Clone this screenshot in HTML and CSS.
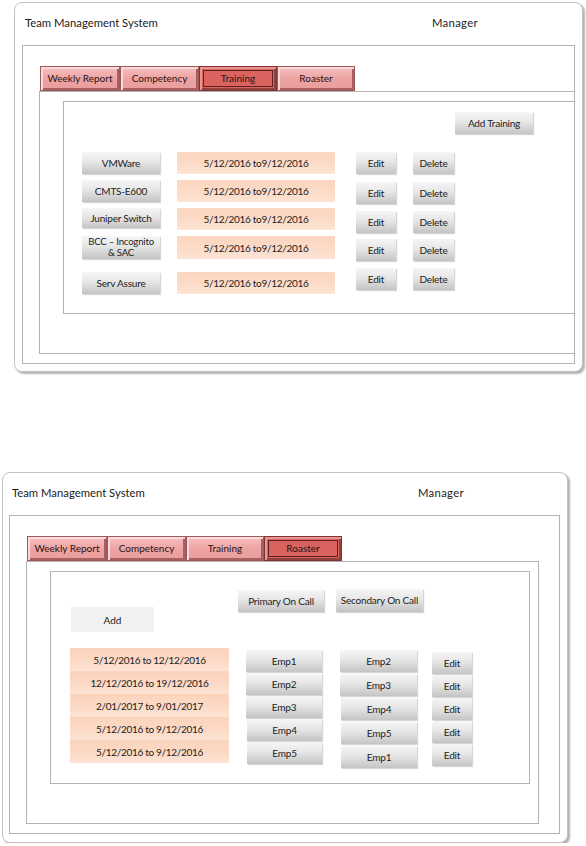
FILE: index.html
```html
<!DOCTYPE html>
<html lang="en">
<head>
<meta charset="utf-8">
<title>Team Management System</title>
<link rel="stylesheet" href="styles.css">
</head>
<body>
<div class="page">
  <section class="screen screen-a">
    <header class="head">
      <span class="title">Team Management System</span>
      <span class="role">Manager</span>
    </header>
    <div class="frame">
      <nav class="tabs">
        <div class="tab t1">Weekly Report</div>
        <div class="tab t2">Competency</div>
        <div class="tab t3 active">Training</div>
        <div class="tab t4">Roaster</div>
      </nav>
      <div class="panel">
        <div class="content">
          <div class="toolbar">
            <div class="btn add-training">Add Training</div>
          </div>
          <div class="trow">
            <div class="btn name">VMWare</div>
            <div class="date">5/12/2016 to9/12/2016</div>
            <div class="btn act edit">Edit</div>
            <div class="btn act delete">Delete</div>
          </div>
          <div class="trow">
            <div class="btn name">CMTS-E600</div>
            <div class="date">5/12/2016 to9/12/2016</div>
            <div class="btn act edit drop2">Edit</div>
            <div class="btn act delete drop2">Delete</div>
          </div>
          <div class="trow">
            <div class="btn name short">Juniper Switch</div>
            <div class="date">5/12/2016 to9/12/2016</div>
            <div class="btn act edit drop3">Edit</div>
            <div class="btn act delete drop3">Delete</div>
          </div>
          <div class="trow tall">
            <div class="btn name two">BCC – Incognito<br>&amp; SAC</div>
            <div class="date two">5/12/2016 to9/12/2016</div>
            <div class="btn act edit drop3">Edit</div>
            <div class="btn act delete drop3">Delete</div>
          </div>
          <div class="trow">
            <div class="btn name">Serv Assure</div>
            <div class="date">5/12/2016 to9/12/2016</div>
            <div class="btn act edit lift4">Edit</div>
            <div class="btn act delete lift4">Delete</div>
          </div>
        </div>
      </div>
    </div>
  </section>

  <section class="screen screen-b">
    <header class="head">
      <span class="title">Team Management System</span>
      <span class="role">Manager</span>
    </header>
    <div class="frame">
      <nav class="tabs">
        <div class="tab t1">Weekly Report</div>
        <div class="tab t2">Competency</div>
        <div class="tab t3">Training</div>
        <div class="tab t4 active">Roaster</div>
      </nav>
      <div class="panel">
        <div class="content">
          <div class="oncall-bar">
            <div class="add">Add</div>
            <div class="btn primary">Primary On Call</div>
            <div class="btn secondary">Secondary On Call</div>
          </div>
          <div class="roster">
            <div class="col dates">
              <div class="rdate">5/12/2016 to 12/12/2016</div>
              <div class="rdate">12/12/2016 to 19/12/2016</div>
              <div class="rdate">2/01/2017 to 9/01/2017</div>
              <div class="rdate">5/12/2016 to 9/12/2016</div>
              <div class="rdate">5/12/2016 to 9/12/2016</div>
            </div>
            <div class="col emp1">
              <div class="btn emp">Emp1</div>
              <div class="btn emp">Emp2</div>
              <div class="btn emp">Emp3</div>
              <div class="btn emp shift">Emp4</div>
              <div class="btn emp shift">Emp5</div>
            </div>
            <div class="col emp2">
              <div class="btn emp">Emp2</div>
              <div class="btn emp">Emp3</div>
              <div class="btn emp shift">Emp4</div>
              <div class="btn emp shift">Emp5</div>
              <div class="btn emp shift">Emp1</div>
            </div>
            <div class="col edits">
              <div class="btn redit">Edit</div>
              <div class="btn redit">Edit</div>
              <div class="btn redit">Edit</div>
              <div class="btn redit">Edit</div>
              <div class="btn redit">Edit</div>
            </div>
          </div>
        </div>
      </div>
    </div>
  </section>
</div>
</body>
</html>
```

FILE: styles.css
```css
* { box-sizing: border-box; }

body {
  margin: 0;
  background: #ffffff;
  font-family: Lato, "Noto Sans", sans-serif;
  color: #1c1c1c;
}

.page { padding-top: 2px; }

.screen {
  border: 1px solid #c2c2c2;
  border-radius: 8px;
  box-shadow: 2px 2px 2px #b2b2b2;
  background: #fff;
}
.screen-a { margin-left: 14px; width: 569px; height: 370px; }
.screen-b { margin-left: 2px; margin-top: 100px; width: 566px; height: 371px; }

.head {
  display: grid;
  grid-template-columns: 407px auto;
  height: 42px;
  padding: 12px 0 0 10px;
  font-size: 11.3px;
  line-height: 16px;
  white-space: nowrap;
}
.screen-b .head { padding-left: 9px; grid-template-columns: 406px auto; }
.role { letter-spacing: 0.3px; }

.frame {
  border: 1px solid #b2b2b2;
  height: 319px;
  padding-top: 20px;
  overflow: hidden;
}
.screen-a .frame { margin-left: 7px; width: 553px; }
.screen-b .frame { margin-left: 6px; width: 551px; }

.tabs { display: flex; margin-left: 17px; height: 25px; }

.tab {
  height: 25px;
  font-size: 10px;
  line-height: 23px;
  text-align: center;
  white-space: nowrap;
  color: #2a1515;
  background: linear-gradient(#f6c0c0, #eea4a4 50%, #ea9c9c);
  border: 1px solid #9c5a5a;
  box-shadow: inset 2px 2px 0 #f9d9d9, inset -2px -2px 0 #a85f5f;
}
.t1 { width: 80px; }
.t2 { width: 79px; }
.t3 { width: 78px; }
.t4 { width: 78px; }

.tab.active {
  background: #d8635f;
  border-color: #7e3434;
  box-shadow:
    inset 2px 2px 0 #e99591,
    inset -2px -2px 0 #96403d,
    inset 0 0 0 3px #d8635f,
    inset 0 0 0 4px #5a2222;
}

.panel {
  margin-left: 16px;
  border: 1px solid #b2b2b2;
  height: 263px;
  padding: 9px 0 0 23px;
}
.screen-a .panel { width: 570px; }
.screen-b .panel { width: 513px; }

.content {
  border: 1px solid #b2b2b2;
  height: 213px;
}
.screen-a .content { width: 545px; }
.screen-b .content { width: 480px; }

.btn {
  display: flex;
  align-items: center;
  justify-content: center;
  text-align: center;
  white-space: nowrap;
  font-size: 10px;
  letter-spacing: -0.2px;
  line-height: 11px;
  color: #222;
  background: linear-gradient(#f6f6f6, #e6e6e6 45%, #c4c4c4);
  box-shadow: 1px 1px 1px #d6d6d6;
}

/* Training screen */
.toolbar { display: flex; height: 50px; padding: 10px 0 0 391px; }
.add-training { width: 78px; height: 22px; }

.trow { display: flex; align-items: flex-start; height: 28px; }
.trow.tall { height: 36px; }

.name { margin-left: 18px; width: 78px; height: 22px; }
.name.short { height: 20px; }
.name.two { height: 23px; line-height: 10.5px; font-size: 9.6px; }

.date {
  margin-left: 17px;
  width: 158px;
  height: 22px;
  display: flex;
  align-items: center;
  justify-content: center;
  white-space: nowrap;
  font-size: 10px;
  letter-spacing: -0.3px;
  color: #222;
  background: linear-gradient(#fbd5bf, #fcdcc9 60%, #fde3d4);
}
.date.two { height: 23px; }

.act { width: 40px; height: 22px; }
.edit { margin-left: 21px; }
.delete { margin-left: 17px; width: 41px; }
.drop2 { margin-top: 2px; }
.drop3 { margin-top: 3px; }
.lift4 { margin-top: -4px; }

/* Roaster screen */
.oncall-bar { display: flex; align-items: flex-start; height: 76px; }
.add {
  margin: 35px 0 0 20px;
  width: 83px;
  height: 25px;
  display: flex;
  align-items: center;
  justify-content: center;
  font-size: 10px;
  background: #f1f1f1;
}
.primary { margin: 18px 0 0 84px; width: 86px; height: 22px; }
.secondary { margin: 17px 0 0 12px; width: 87px; height: 23px; }

.roster { display: flex; align-items: flex-start; }
.col { display: flex; flex-direction: column; }

.dates { margin-left: 19px; width: 159px; }
.rdate {
  height: 23px;
  display: flex;
  align-items: center;
  justify-content: center;
  white-space: nowrap;
  font-size: 10px;
  letter-spacing: -0.3px;
  color: #222;
  background: linear-gradient(#fbd3bc, #fcdac7 60%, #fde4d6);
}

.emp1 { margin-left: 17px; margin-top: 2px; gap: 1px; width: 76px; }
.emp2 { margin-left: 18px; margin-top: 2px; gap: 2px; width: 77px; }
.emp { height: 22px; }
.emp1 .shift { margin-left: 1px; }
.emp2 .shift { margin-left: 1px; }

.edits { margin-left: 15px; margin-top: 4px; gap: 1px; width: 40px; }
.redit { height: 22px; }
```
